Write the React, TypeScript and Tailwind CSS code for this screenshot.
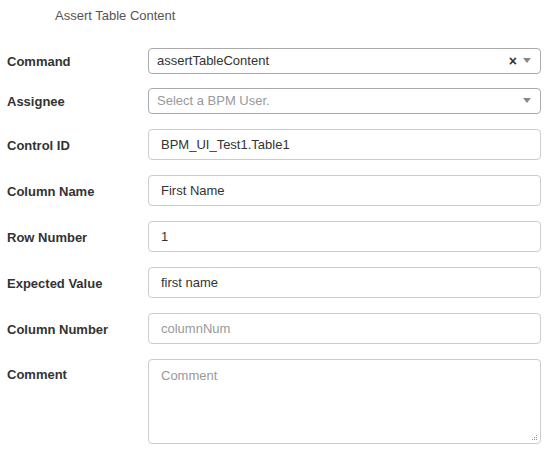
import React from 'react';

const font = { fontFamily: '"Liberation Sans", Arial, sans-serif' };

function Label({ children }: { children: React.ReactNode }) {
  return <div className="w-[141px] shrink-0 pt-[3px] text-[13px] font-bold text-[#333]">{children}</div>;
}

function TextInput({ value, placeholder }: { value?: string; placeholder?: string }) {
  return (
    <input
      type="text"
      defaultValue={value}
      placeholder={placeholder}
      className="h-[31px] flex-1 rounded-[4px] border border-[#ccc] bg-white px-[12px] text-[13px] text-[#333] placeholder:text-[#999] outline-none"
    />
  );
}

function Arrow() {
  return (
    <svg width="8" height="5" viewBox="0 0 8 5" className="ml-[6px]">
      <path d="M0 0 L8 0 L4 5 Z" fill="#888" />
    </svg>
  );
}

export default function App() {
  return (
    <div className="h-[455px] w-[550px] bg-white pl-[7px] pr-[9px]" style={font}>
      <div className="pl-[48px] pt-[6px] text-[13px] text-[#555]">Assert Table Content</div>

      <div className="mt-[22px] flex flex-col">
        <div className="flex items-center">
          <Label>Command</Label>
          <div className="flex h-[26px] flex-1 items-center rounded-[4px] border border-[#aaa] bg-white pl-[8px] pr-[9px]">
            <span className="flex-1 text-[13px] text-[#333]">assertTableContent</span>
            <span className="text-[14px] font-bold leading-none text-[#333]">×</span>
            <Arrow />
          </div>
        </div>

        <div className="mt-[14px] flex items-center">
          <Label>Assignee</Label>
          <div className="flex h-[26px] flex-1 items-center rounded-[4px] border border-[#aaa] bg-white pl-[8px] pr-[9px]">
            <span className="flex-1 text-[13px] text-[#999]">Select a BPM User.</span>
            <Arrow />
          </div>
        </div>

        <div className="mt-[15px] flex items-center">
          <Label>Control ID</Label>
          <TextInput value="BPM_UI_Test1.Table1" />
        </div>

        <div className="mt-[15px] flex items-center">
          <Label>Column Name</Label>
          <TextInput value="First Name" />
        </div>

        <div className="mt-[15px] flex items-center">
          <Label>Row Number</Label>
          <TextInput value="1" />
        </div>

        <div className="mt-[15px] flex items-center">
          <Label>Expected Value</Label>
          <TextInput value="first name" />
        </div>

        <div className="mt-[15px] flex items-center">
          <Label>Column Number</Label>
          <TextInput placeholder="columnNum" />
        </div>

        <div className="mt-[15px] flex items-start">
          <div className="pt-[3px]">
            <Label>Comment</Label>
          </div>
          <div className="relative flex-1">
            <textarea
              placeholder="Comment"
              className="block h-[85px] w-full resize-none rounded-[4px] border border-[#ccc] bg-white px-[12px] py-[6px] text-[13px] text-[#333] placeholder:text-[#999] outline-none"
            />
            <svg width="7" height="7" viewBox="0 0 7 7" className="absolute bottom-[3px] right-[3px]">
              <rect x="5" y="1" width="1" height="1" fill="#999" />
              <rect x="3" y="3" width="1" height="1" fill="#999" />
              <rect x="5" y="3" width="1" height="1" fill="#999" />
              <rect x="1" y="5" width="1" height="1" fill="#999" />
              <rect x="3" y="5" width="1" height="1" fill="#999" />
              <rect x="5" y="5" width="1" height="1" fill="#999" />
            </svg>
          </div>
        </div>
      </div>
    </div>
  );
}
